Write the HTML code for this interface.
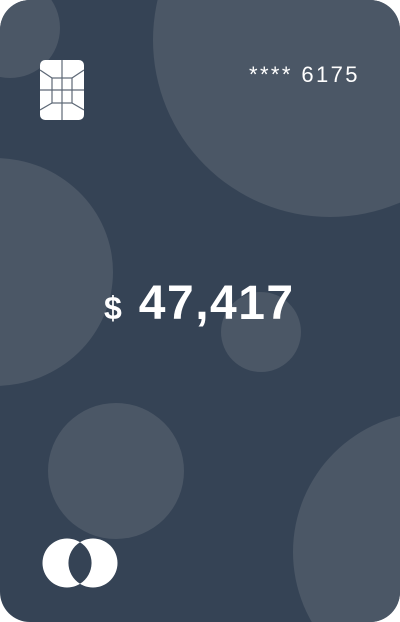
<!DOCTYPE html>
<html><head><style>
html,body{margin:0;padding:0;background:#fff;width:400px;height:622px;overflow:hidden;}
.card{position:relative;width:400px;height:622px;background:#354355;border-radius:30px;overflow:hidden;font-family:"Liberation Sans",sans-serif;color:#fff;}
.num{position:absolute;left:249px;top:62px;font-size:22px;letter-spacing:2.4px;white-space:nowrap;}
.amt{position:absolute;left:104px;top:276px;font-weight:bold;white-space:nowrap;}
.amt .d{font-size:32px;}
.amt .n{font-size:48px;margin-left:17px;letter-spacing:1.5px;}
</style></head><body>
<div class="card">
<svg style="position:absolute;left:0;top:0" width="400" height="622" viewBox="0 0 400 622">
<g fill="#4b5766">
<circle cx="10" cy="28" r="50"/>
<circle cx="330" cy="40" r="177"/>
<ellipse cx="-5" cy="272" rx="118" ry="114"/>
<circle cx="261" cy="332" r="40"/>
<circle cx="116" cy="471" r="68"/>
<circle cx="433" cy="552" r="140"/>
</g></svg>
<svg style="position:absolute;left:40px;top:60px" width="44" height="60" viewBox="0 0 44 60">
<rect x="0" y="0" width="44" height="60" rx="5" fill="#fff"/>
<g stroke="#5d6876" stroke-width="1.2" fill="none">
<line x1="22" y1="0" x2="22" y2="60"/>
<line x1="0" y1="30" x2="44" y2="30"/>
<rect x="12" y="18" width="20" height="25"/>
<line x1="0" y1="10" x2="12" y2="18"/>
<line x1="44" y1="10" x2="32" y2="18"/>
<line x1="0" y1="50" x2="12" y2="43"/>
<line x1="44" y1="50" x2="32" y2="43"/>
</g></svg>
<div class="num">**** 6175</div>
<div class="amt"><span class="d">$</span><span class="n">47,417</span></div>
<svg style="position:absolute;left:40px;top:536px" width="80" height="54" viewBox="0 0 80 54">
<circle cx="27" cy="27" r="24.5" fill="#fff"/>
<circle cx="53" cy="27" r="24.5" fill="#fff"/>
<path d="M40 6.2 A24.5 24.5 0 0 1 40 47.8 A24.5 24.5 0 0 1 40 6.2Z" fill="#354355"/>
</svg>
</div>
</body></html>
